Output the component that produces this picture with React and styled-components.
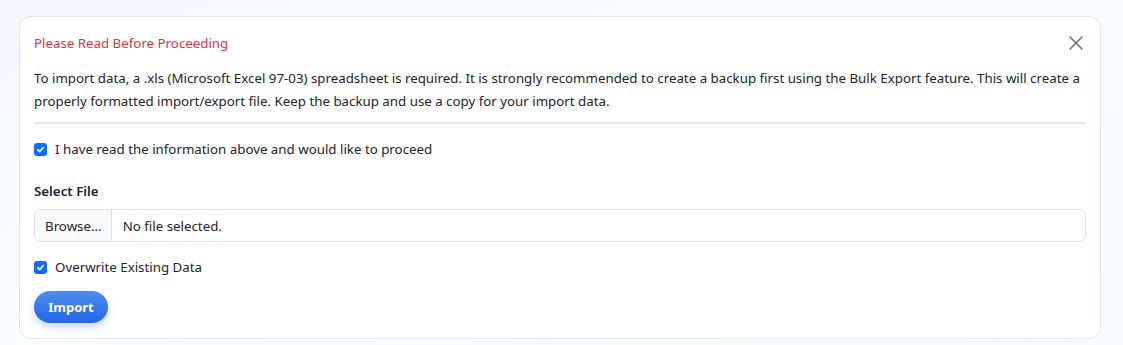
import React from 'react';
import styled, { createGlobalStyle } from 'styled-components';

const Global = createGlobalStyle`
    html, body { margin: 0; padding: 0; }
    body {
        background: linear-gradient(160deg, #f3f6fb 0%, #fbfcfe 40%, #f7f9fc 100%);
        font-family: "Segoe UI", "Noto Sans", "Open Sans", sans-serif;
        color: #212529;
        height: 345px;
    }
`

const Page = styled.div`
    padding: 16px 22px 7px 19px;
`

const Card = styled.div`
    background: #fff;
    border: 1px solid #e3e6ea;
    border-radius: 12px;
    padding: 14px 14px 15px 14px;
`

const Header = styled.div`
    display: flex;
    justify-content: space-between;
    align-items: center;
    height: 24px;
`

const Title = styled.div`
    color: #dc3545;
    font-size: 13.3px;
`

const Close = styled.button`
    border: none;
    background: none;
    padding: 0;
    margin-right: 2px;
    width: 16px;
    height: 16px;
    display: flex;
    cursor: pointer;
`

const Body = styled.p`
    margin: 12px 0 0 0;
    font-size: 13.3px;
    line-height: 23px;
    padding-bottom: 9px;
    border-bottom: 2px solid #e4e7eb;
`

const CheckRow = styled.label`
    display: flex;
    align-items: center;
    gap: 8px;
    font-size: 13.3px;
    margin-top: ${p => p.top}px;
    height: 20px;
`

const Box = styled.span`
    width: 13px;
    height: 13px;
    border-radius: 3px;
    background: #0d6efd;
    display: inline-flex;
    align-items: center;
    justify-content: center;
`

const Label = styled.div`
    font-size: 13.3px;
    font-weight: 600;
    margin-top: 23px;
    height: 20px;
`

const FileInput = styled.div`
    box-sizing: border-box;
    display: flex;
    margin-top: 7px;
    height: 33px;
    border: 1px solid #dee2e6;
    border-radius: 6px;
    overflow: hidden;
    font-size: 13.3px;
`

const Browse = styled.div`
    background: #f8f9fa;
    border-right: 1px solid #dee2e6;
    padding: 0 9px 0 10px;
    display: flex;
    align-items: center;
`

const FileName = styled.div`
    padding: 0 11px;
    display: flex;
    align-items: center;
`

const ImportButton = styled.button`
    margin-top: 14px;
    width: 74px;
    height: 32px;
    border: none;
    border-radius: 16px;
    background: linear-gradient(180deg, #4d8ef0 0%, #2563eb 100%);
    color: #fff;
    font-family: inherit;
    font-weight: 700;
    font-size: 13px;
    box-shadow: 0 4px 10px rgba(37, 99, 235, 0.25);
    cursor: pointer;
`

const Check = () => (
    <Box>
        <svg width="9" height="9" viewBox="0 0 10 10">
            <path d="M2 5.2 L4.2 7.3 L8 2.8" fill="none" stroke="#fff" strokeWidth="1.8" strokeLinecap="round" strokeLinejoin="round" />
        </svg>
    </Box>
)

const App = () => {
    return (
        <>
            <Global />
            <Page>
                <Card>
                    <Header>
                        <Title>Please Read Before Proceeding</Title>
                        <Close aria-label="close">
                            <svg width="16" height="16" viewBox="0 0 16 16">
                                <path d="M2 2 L14 14 M14 2 L2 14" stroke="#6c6f73" strokeWidth="1.6" strokeLinecap="round" />
                            </svg>
                        </Close>
                    </Header>
                    <Body>
                        To import data, a .xls (Microsoft Excel 97-03) spreadsheet is required. It is strongly recommended to create a backup first using the Bulk Export feature. This will create a properly formatted import/export file. Keep the backup and use a copy for your import data.
                    </Body>
                    <CheckRow top={15}>
                        <Check />
                        I have read the information above and would like to proceed
                    </CheckRow>
                    <Label>Select File</Label>
                    <FileInput>
                        <Browse>Browse...</Browse>
                        <FileName>No file selected.</FileName>
                    </FileInput>
                    <CheckRow top={15}>
                        <Check />
                        Overwrite Existing Data
                    </CheckRow>
                    <ImportButton>Import</ImportButton>
                </Card>
            </Page>
        </>
    );
};

export default App;
